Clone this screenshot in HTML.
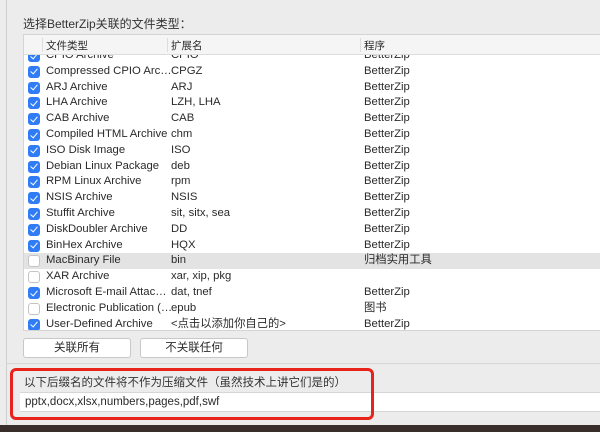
<!DOCTYPE html>
<html><head><meta charset="utf-8"><style>
*{margin:0;padding:0;box-sizing:border-box}
body{width:600px;height:432px;overflow:hidden;background:#3a2e2c;font-family:"Liberation Sans","Noto Sans CJK SC",sans-serif;font-size:11.3px;color:#2a2a2a;position:relative}
.win{position:absolute;left:0;top:0;width:600px;height:425px;background:#ececec}
.edge{position:absolute;left:6px;top:0;width:1px;height:425px;background:#cfcfcf}
.title{position:absolute;left:23px;top:15px;font-size:12px;color:#333}
.tbl{position:absolute;left:23px;top:34px;width:580px;height:297px;background:#fff;border:1px solid #d4d4d4;overflow:hidden}
.hdr{position:absolute;left:0;top:0;width:100%;height:20px;background:#f5f5f5;border-bottom:1px solid #dcdcdc;font-size:10.5px;z-index:5}
.hdr span{position:absolute;top:3px}
.hdr i{position:absolute;top:3px;width:1px;height:14px;background:#ddd}
.row{position:absolute;left:0;width:100%;height:15.8px;line-height:15.8px}
.row span{position:absolute;white-space:nowrap}
.cb{position:absolute;left:4px;top:2px;width:12px;height:12px;border-radius:3px}
.on{background:#2f7cf6}
.on:after{content:"";position:absolute;left:4px;top:1.5px;width:3px;height:6px;border:solid #fff;border-width:0 1.6px 1.6px 0;transform:rotate(40deg)}
.off{background:#fff;border:1px solid #c4c4c4}
.btn{position:absolute;top:338px;height:20px;background:#fff;border:1px solid #c8c8c8;border-radius:3px;text-align:center;line-height:18px;font-size:11.5px}
.sep{position:absolute;left:7px;top:363px;width:593px;height:1px;background:#d6d6d6}
.lbl{position:absolute;left:24px;top:374px;font-size:11.5px;color:#333}
.fld{position:absolute;left:20px;top:392px;width:580px;height:20px;background:#fff;border-top:1px solid #d6d6d6;border-bottom:1px solid #d6d6d6;padding-left:5px;line-height:19px;font-size:11.5px}
.red{position:absolute;left:10px;top:368px;width:364px;height:52px;border:3px solid #e8231b;border-radius:6px}
</style></head><body>
<div class="win"></div><div class="edge"></div>
<div class="title">选择BetterZip关联的文件类型：</div>
<div class="tbl">
<div class="hdr"><i style="left:18px"></i><span style="left:22px">文件类型</span><i style="left:143px"></i><span style="left:147px">扩展名</span><i style="left:336px"></i><span style="left:340px">程序</span></div>
<div id="rows"></div>
</div>
<div class="btn" style="left:23px;width:108px">关联所有</div>
<div class="btn" style="left:140px;width:108px">不关联任何</div>
<div class="sep"></div>
<div class="lbl">以下后缀名的文件将不作为压缩文件（虽然技术上讲它们是的）</div>
<div class="fld">pptx,docx,xlsx,numbers,pages,pdf,swf</div>
<div class="red"></div>
<script>
var d=[[1,"CPIO Archive","CPIO","BetterZip"],[1,"Compressed CPIO Arc…","CPGZ","BetterZip"],[1,"ARJ Archive","ARJ","BetterZip"],[1,"LHA Archive","LZH, LHA","BetterZip"],[1,"CAB Archive","CAB","BetterZip"],[1,"Compiled HTML Archive","chm","BetterZip"],[1,"ISO Disk Image","ISO","BetterZip"],[1,"Debian Linux Package","deb","BetterZip"],[1,"RPM Linux Archive","rpm","BetterZip"],[1,"NSIS Archive","NSIS","BetterZip"],[1,"Stuffit Archive","sit, sitx, sea","BetterZip"],[1,"DiskDoubler Archive","DD","BetterZip"],[1,"BinHex Archive","HQX","BetterZip"],[0,"MacBinary File","bin","归档实用工具"],[0,"XAR Archive","xar, xip, pkg",""],[1,"Microsoft E-mail Attac…","dat, tnef","BetterZip"],[0,"Electronic Publication (…","epub","图书"],[1,"User-Defined Archive","<点击以添加你自己的>","BetterZip"]];
var h="";d.forEach(function(r,i){var t=13+i*15.8;var bg=i==13?"background:#e3e3e3;":"";
h+='<div class="row" style="top:'+t+'px;'+bg+'"><div class="cb '+(r[0]?'on':'off')+'"></div><span style="left:22px">'+r[1]+'</span><span style="left:147px">'+r[2].replace(/</g,'&lt;').replace(/>/g,'&gt;')+'</span><span style="left:340px">'+r[3]+'</span></div>';});
document.getElementById("rows").innerHTML=h;
</script>
</body></html>
